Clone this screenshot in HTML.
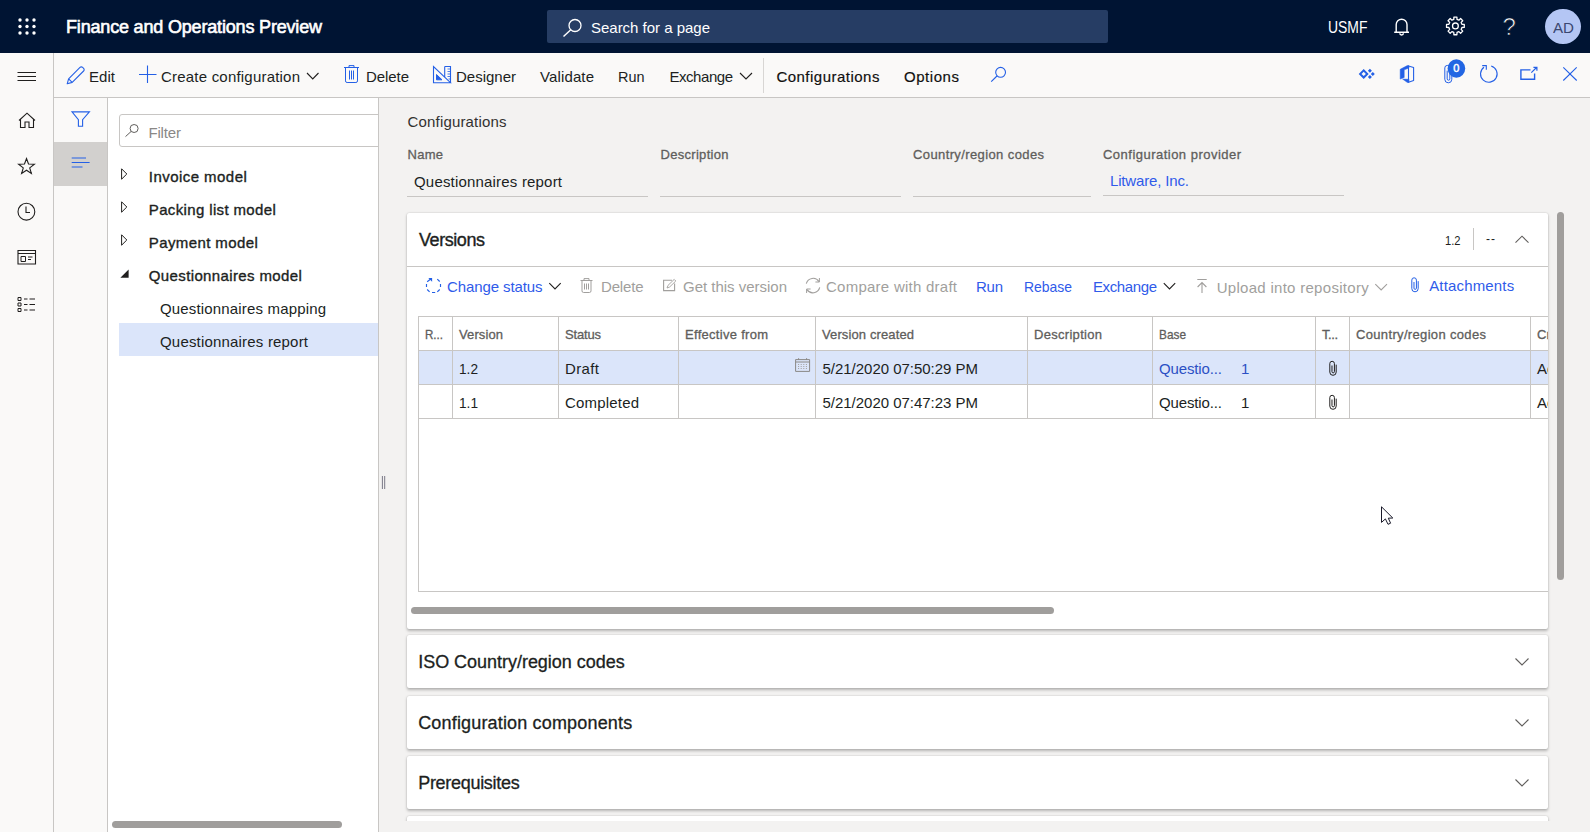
<!DOCTYPE html>
<html lang="en"><head><meta charset="utf-8"><title>Configurations</title>
<style>
html,body{margin:0;padding:0;}
body{width:1590px;height:832px;overflow:hidden;position:relative;background:#f3f2f1;font-family:"Liberation Sans",sans-serif;}
.a{position:absolute;}
.t{position:absolute;white-space:nowrap;line-height:20px;height:20px;}
svg{position:absolute;overflow:visible;}
#top{left:0;top:0;width:1590px;height:53px;background:#001433;}
#search{left:547px;top:10px;width:561px;height:33px;background:#263d64;border-radius:2px;}
#avatar{left:1545px;top:8.8px;width:36px;height:35.4px;border-radius:50%;background:#b4c6f4;}
#nav{left:0;top:53px;width:53px;height:779px;background:#faf9f8;border-right:1px solid #c8c6c4;}
#abar{left:54px;top:53px;width:1536px;height:44px;background:#faf9f8;border-bottom:1px solid #c8c6c4;}
#fstrip{left:54px;top:98px;width:53px;height:734px;background:#faf9f8;border-right:1px solid #c8c6c4;}
#fsel{left:54px;top:142px;width:53px;height:44px;background:#d2d0ce;}
#tree{left:108px;top:98px;width:270px;height:734px;background:#ffffff;border-right:1px solid #c8c6c4;}
#finput{left:119px;top:114px;width:270px;height:31px;border:1px solid #c8c6c4;border-radius:3px;background:#fff;}
#treeclip{left:108px;top:98px;width:270px;height:734px;overflow:hidden;}
#tsel{left:119px;top:323px;width:259px;height:33px;background:#dbe5fa;}
#tscroll{left:112px;top:821px;width:230px;height:7px;border-radius:4px;background:#a09e9c;}
.ul{height:1px;background:#c8c6c4;}
.card{background:#fff;box-shadow:0 1.5px 3px rgba(0,0,0,.26),0 0 1.5px rgba(0,0,0,.14);border-radius:2px;}
#vcard{left:407px;top:213px;width:1141px;height:416px;}
#vclip{left:407px;top:213px;width:1141px;height:416px;overflow:hidden;}
#grid{left:11px;top:103px;width:1200px;height:274px;border:1px solid #c8c6c4;}
.vl{position:absolute;top:0;width:1px;height:101px;background:#c8c6c4;}
.hl{position:absolute;left:0;width:1200px;height:1px;background:#c8c6c4;}
#rsel{left:0;top:34px;width:1200px;height:33px;background:#dbe5fa;}
#hscroll{left:411px;top:607px;width:643px;height:7px;border-radius:4px;background:#a09e9c;}
#vscroll{left:1557px;top:212px;width:7px;height:368px;border-radius:4px;background:#a09e9c;}

</style></head>
<body>
<div class="a" id="top"></div>
<div class="a" id="search"></div>
<div class="a" id="avatar"></div>
<div class="a" id="nav"></div>
<div class="a" id="abar"></div>
<div class="a" style="left:763px;top:58px;width:1px;height:35px;background:#d8d6d4"></div>
<div class="a" id="fstrip"></div>
<div class="a" id="fsel"></div>
<div class="a" id="tree"></div>
<div class="a" id="treeclip"><div class="a" id="finput" style="left:11px;top:16px"></div></div>
<div class="a" id="tsel"></div>
<div class="a" id="tscroll"></div>
<!-- field underlines -->
<div class="a ul" style="left:407px;top:196px;width:241px"></div>
<div class="a ul" style="left:660px;top:196px;width:241px"></div>
<div class="a ul" style="left:913px;top:196px;width:178px"></div>
<div class="a ul" style="left:1103px;top:195px;width:241px"></div>
<!-- versions card -->
<div class="a card" id="vcard"></div>
<div class="a" id="vclip">
  <div class="a" style="left:0;top:53px;width:1141px;height:1px;background:#c8c6c4"></div>
  <div class="a" style="left:1066px;top:15px;width:1px;height:22px;background:#c8c6c4"></div>
  <div class="a" id="grid">
    <div class="a" id="rsel"></div>
    <div class="hl" style="top:33px"></div><div class="hl" style="top:67px"></div><div class="hl" style="top:101px"></div>
    <div class="vl" style="left:33px"></div><div class="vl" style="left:139px"></div><div class="vl" style="left:259px"></div>
    <div class="vl" style="left:396px"></div><div class="vl" style="left:608px"></div><div class="vl" style="left:733px"></div>
    <div class="vl" style="left:896px"></div><div class="vl" style="left:930px"></div><div class="vl" style="left:1111px"></div>
    <span class="t" style="left:1118px;top:8px;font-size:13px;-webkit-text-stroke:0.3px;color:#605e5c">Created by</span>
    <span class="t" style="left:1118px;top:42px;font-size:15px;color:#201f1e">Admin</span>
    <span class="t" style="left:1118px;top:76px;font-size:15px;color:#201f1e">Admin</span>
  </div>
</div>
<div class="a" id="hscroll"></div>
<div class="a" id="vscroll"></div>
<div class="a card" style="left:407px;top:635px;width:1141px;height:53px"></div>
<div class="a card" style="left:407px;top:696px;width:1141px;height:53px"></div>
<div class="a card" style="left:407px;top:756px;width:1141px;height:53px"></div>
<div class="a" style="left:400px;top:810px;width:1160px;height:11px;overflow:hidden"><div class="a card" style="left:7px;top:6px;width:1141px;height:52px"></div></div>
<svg width="1590" height="832" viewBox="0 0 1590 832" style="left:0;top:0">
<circle cx="20" cy="20" r="1.7" fill="#fff"/>
<circle cx="20" cy="26.5" r="1.7" fill="#fff"/>
<circle cx="20" cy="33" r="1.7" fill="#fff"/>
<circle cx="27" cy="20" r="1.7" fill="#fff"/>
<circle cx="27" cy="26.5" r="1.7" fill="#fff"/>
<circle cx="27" cy="33" r="1.7" fill="#fff"/>
<circle cx="34" cy="20" r="1.7" fill="#fff"/>
<circle cx="34" cy="26.5" r="1.7" fill="#fff"/>
<circle cx="34" cy="33" r="1.7" fill="#fff"/>
<circle cx="575" cy="25.5" r="6" stroke="#fff" stroke-width="1.3" fill="none"/>
<path d="M570.8 29.8 L563.5 36.6" stroke="#ffffff" stroke-width="1.4" fill="none" />
<path d="M1396.2 32 V24.6 a5.4 5.4 0 0 1 10.8 0 V32 M1394.2 32.2 H1409 M1399.8 33.2 a1.8 1.8 0 0 0 3.6 0" stroke="#ffffff" stroke-width="1.4" fill="none" />
<path d="M1453.81 19.39 L1453.88 17.03 L1456.92 17.03 L1456.99 19.39 L1458.88 20.17 L1460.60 18.55 L1462.75 20.70 L1461.13 22.42 L1461.91 24.31 L1464.27 24.38 L1464.27 27.42 L1461.91 27.49 L1461.13 29.38 L1462.75 31.10 L1460.60 33.25 L1458.88 31.63 L1456.99 32.41 L1456.92 34.77 L1453.88 34.77 L1453.81 32.41 L1451.92 31.63 L1450.20 33.25 L1448.05 31.10 L1449.67 29.38 L1448.89 27.49 L1446.53 27.42 L1446.53 24.38 L1448.89 24.31 L1449.67 22.42 L1448.05 20.70 L1450.20 18.55 L1451.92 20.17 Z" stroke="#ffffff" stroke-width="1.3" fill="none" stroke-linejoin="round"/>
<circle cx="1455.4" cy="25.9" r="2.9" stroke="#fff" stroke-width="1.3" fill="none"/>
<path d="M17.5 72.5 H36 M17.5 76.5 H36 M17.5 80.5 H36" stroke="#201f1e" stroke-width="1.1" fill="none" />
<path d="M19 120.5 L27 113.2 L35 120.5 M20.5 119.5 V127.5 H25 V122 H29 V127.5 H33.5 V119.5" stroke="#201f1e" stroke-width="1.1" fill="none" />
<path d="M26.50 158.50 L28.50 164.05 L34.39 164.24 L29.73 167.85 L31.38 173.51 L26.50 170.20 L21.62 173.51 L23.27 167.85 L18.61 164.24 L24.50 164.05 Z" stroke="#201f1e" stroke-width="1.1" fill="none" stroke-linejoin="miter"/>
<circle cx="26.4" cy="211.7" r="8.4" stroke="#201f1e" stroke-width="1.1" fill="none"/>
<path d="M26 206.5 V212.5 H30" stroke="#201f1e" stroke-width="1.1" fill="none" />
<path d="M18 250.5 H35.5 V264 H18 Z M18 253.5 H35.5" stroke="#201f1e" stroke-width="1.1" fill="none" />
<path d="M21 256.5 H25.5 V261.5 H21 Z M28 257 H32.5 M28 259.5 H31" stroke="#201f1e" stroke-width="1" fill="none" />
<path d="M18 297.5 h3 v3 h-3 Z" stroke="#201f1e" stroke-width="1" fill="none" />
<path d="M24 299 H27.5 M29.5 299 H35" stroke="#201f1e" stroke-width="1.1" fill="none" />
<path d="M18 303 h3 v3 h-3 Z" stroke="#201f1e" stroke-width="1" fill="none" />
<path d="M24 304.5 H27.5 M29.5 304.5 H35" stroke="#201f1e" stroke-width="1.1" fill="none" />
<path d="M18 308.5 h3 v3 h-3 Z" stroke="#201f1e" stroke-width="1" fill="none" />
<path d="M24 310 H27.5 M29.5 310 H35" stroke="#201f1e" stroke-width="1.1" fill="none" />
<path d="M67.2 83.8 L68.6 78.8 L80 67.4 a1.8 1.8 0 0 1 2.6 0 l1 1 a1.8 1.8 0 0 1 0 2.6 L72.2 82.4 Z M68.6 78.8 L72.2 82.4" stroke="#2460e6" stroke-width="1.1" fill="none" stroke-linejoin="round"/>
<path d="M139 74.5 H156.5 M147.5 65.5 V83" stroke="#2460e6" stroke-width="1.1" fill="none" />
<path d="M307 73 L312.75 79 L318.5 73" stroke="#201f1e" stroke-width="1.1" fill="none" />
<path d="M740 73 L746 79 L752 73" stroke="#201f1e" stroke-width="1.1" fill="none" />
<path d="M344 67.5 H359 M349 67.5 V65.6 H354 V67.5 M345.5 67.5 V80.9 a1.6 1.6 0 0 0 1.6 1.6 H355.9 a1.6 1.6 0 0 0 1.6 -1.6 V67.5 M349.5 70.5 V79.5 M351.5 70.5 V79.5 M353.5 70.5 V79.5" stroke="#2460e6" stroke-width="1" fill="none" />
<path d="M433.5 66.5 V82.7 H450.5 Z M444.7 66.5 H450.5 V82.7 M444.7 66.5 V77" stroke="#2460e6" stroke-width="1.1" fill="none" stroke-linejoin="miter"/>
<path d="M436.5 74.5 V79.8 H442 Z" stroke="#2460e6" stroke-width="1" fill="#2460e6" />
<path d="M447.5 69 h3 M447.5 71.5 h3 M447.5 74 h3 M447.5 76.5 h3 M448.5 79 h2" stroke="#2460e6" stroke-width="0.8" fill="none" />
<circle cx="1000.6" cy="72.3" r="4.9" stroke="#2460e6" stroke-width="1.1" fill="none"/>
<path d="M997.2 75.8 L991.2 81.6" stroke="#2460e6" stroke-width="1.2" fill="none" />
<path d="M1363.7 68.9 L1368.7 73.9 L1363.7 78.9 L1358.7 73.9 Z M1363.7 71.7 L1365.9 73.9 L1363.7 76.1 L1361.5 73.9 Z" fill="#2460e6" fill-rule="evenodd"/>
<path d="M1369.9 68.8 L1371.9 70.8 L1369.9 72.8 L1367.9 70.8 Z M1372.8 71.9 L1374.8 73.9 L1372.8 75.9 L1370.8 73.9 Z M1369.9 75 L1371.9 77 L1369.9 79 L1367.9 77 Z" fill="#2460e6"/>
<path d="M1400.2 69.3 L1407.4 65.5 L1409 65.8 L1409 68 L1404.2 69.8 L1404.2 77.5 L1400.2 79.1 Z M1402.6 79.1 L1409 79.3 L1409 82.4 L1407.4 82.5 Z" fill="#2460e6" stroke="#2460e6" stroke-width="0.5" stroke-linejoin="round"/>
<path d="M1408.5 65.9 L1413.6 67.5 V80.6 L1408.5 82.2 Z" stroke="#2460e6" stroke-width="1.1" fill="none" stroke-linejoin="round"/>
<path d="M1451.8 69.576 V79.3 A3.5 3.5 0 0 1 1444.8 79.3 V67.92 A2.52 2.52 0 0 1 1449.84 67.92 V78.9 A1.33 1.33 0 0 1 1447.18 78.9 V70.62" stroke="#2460e6" stroke-width="1" fill="none" />
<ellipse cx="1456.4" cy="68.5" rx="8.8" ry="9.3" fill="#2266e3"/>
<path d="M1491.2 66 A8.3 8.3 0 1 1 1484 67.2" stroke="#2460e6" stroke-width="1.1" fill="none" />
<path d="M1482.2 65.6 H1486.3 V69.8" stroke="#2460e6" stroke-width="1.1" fill="none" />
<path d="M1530.5 69.9 H1520.9 V79.3 H1534.6 V73.6" stroke="#2460e6" stroke-width="1.4" fill="none" />
<path d="M1531.3 72.6 L1536.8 67.3 M1533.4 67.3 H1536.9 V70.8" stroke="#2460e6" stroke-width="1.2" fill="none" />
<path d="M1563.3 67.3 L1576.7 80.5 M1576.7 67.3 L1563.3 80.5" stroke="#2460e6" stroke-width="1.1" fill="none" />
<path d="M72 111.9 H89.4 L82.6 119.6 V126.3 H78.4 V119.6 Z" stroke="#2460e6" stroke-width="1.1" fill="none" stroke-linejoin="miter"/>
<path d="M71.7 158 H86 M71.7 162.5 H89.6 M71.7 167 H82.5" stroke="#2460e6" stroke-width="1.1" fill="none" />
<circle cx="134.1" cy="128.5" r="4" stroke="#605e5c" stroke-width="1" fill="none"/>
<path d="M131.2 131.4 L125.5 136.6" stroke="#605e5c" stroke-width="1" fill="none" />
<path d="M121.6 168.8 V179.2 L126.8 174 Z" stroke="#201f1e" stroke-width="1" fill="none" />
<path d="M121.6 201.8 V212.2 L126.8 207 Z" stroke="#201f1e" stroke-width="1" fill="none" />
<path d="M121.6 234.8 V245.2 L126.8 240 Z" stroke="#201f1e" stroke-width="1" fill="none" />
<path d="M128.6 269.6 V277.8 H120.4 Z" fill="#201f1e"/>
<path d="M382.4 476 V489 M384.7 476 V489" stroke="#6b6a7a" stroke-width="0.9" fill="none" />
<path d="M1515.5 242.6 L1522 236.2 L1528.5 242.6" stroke="#605e5c" stroke-width="1.1" fill="none" />
<path d="M1515.5 658.5 L1522 664.9 L1528.5 658.5" stroke="#605e5c" stroke-width="1.1" fill="none" />
<path d="M1515.5 719.5 L1522 725.9 L1528.5 719.5" stroke="#605e5c" stroke-width="1.1" fill="none" />
<path d="M1515.5 779.5 L1522 785.9 L1528.5 779.5" stroke="#605e5c" stroke-width="1.1" fill="none" />
<path d="M426.5 284 V287 M440.5 284 V287 M432 292.5 H435.2 M437.3 279.1 L439.7 281.5 M437.3 291.9 L439.7 289.5 M427.2 289.5 L429.6 291.9 M427.2 281.8 L431 278.8" stroke="#2460e6" stroke-width="1.15" fill="none" />
<path d="M428.3 277.9 H432.1 V281.7 Z" fill="#2460e6"/>
<path d="M549.3 283.2 L555 289 L560.7 283.2" stroke="#201f1e" stroke-width="1.1" fill="none" />
<path d="M580.5 280.5 H592.5 M584 280.5 V278.6 H589 V280.5 M582 280.5 V290.9 a1.6 1.6 0 0 0 1.6 1.6 H589.4 a1.6 1.6 0 0 0 1.6 -1.6 V280.5 M584.5 283.5 V289.5 M586.5 283.5 V289.5 M588.5 283.5 V289.5" stroke="#a19f9d" stroke-width="1" fill="none" />
<path d="M672 280.3 H663.6 V290.6 H674.6 V283.6" stroke="#a19f9d" stroke-width="1.1" fill="none" />
<path d="M667 288 L668 285.4 L674.2 279.4 L675.8 281 L669.6 287 Z" stroke="#a19f9d" stroke-width="0.9" fill="none" />
<path d="M806.3 283.6 A7 7 0 0 1 819 281.6 M819.7 287.4 A7 7 0 0 1 807 289.6" stroke="#a19f9d" stroke-width="1.1" fill="none" />
<path d="M819.4 278 V282 H815.4 M806.6 293 V289 H810.6" stroke="#a19f9d" stroke-width="1" fill="none" />
<path d="M1163.8 283.2 L1169.5 289 L1175.2 283.2" stroke="#201f1e" stroke-width="1.1" fill="none" />
<path d="M1197.3 279.5 H1206.7 M1202 293 V282.5 M1197.6 287 L1202 282.5 L1206.4 287" stroke="#a19f9d" stroke-width="1.1" fill="none" />
<path d="M1375.3 284.2 L1381.15 290 L1387 284.2" stroke="#a19f9d" stroke-width="1.1" fill="none" />
<path d="M1418.2 281.16 V288.6 A3.2 3.2 0 0 1 1411.8 288.6 V280.104 A2.304 2.304 0 0 1 1416.41 280.104 V288.2 A1.216 1.216 0 0 1 1413.98 288.2 V282" stroke="#2460e6" stroke-width="1" fill="none" />
<path d="M795.6 359.6 H809.6 V371.4 H795.6 Z M795.6 362 H809.6 M798.6 358.2 V360 M806.6 358.2 V360" stroke="#8a8886" stroke-width="1" fill="none" />
<path d="M798.6 364 V370 M801.2 364 V370 M803.8 364 V370 M806.4 364 V370" stroke="#a19f9d" stroke-width="1" fill="none" stroke-dasharray="1 1"/>
<path d="M1336.2 364.66 V372.1 A3.2 3.2 0 0 1 1329.8 372.1 V363.604 A2.304 2.304 0 0 1 1334.41 363.604 V371.7 A1.216 1.216 0 0 1 1331.98 371.7 V365.5" stroke="#201f1e" stroke-width="1" fill="none" />
<path d="M1336.2 398.66 V406.1 A3.2 3.2 0 0 1 1329.8 406.1 V397.604 A2.304 2.304 0 0 1 1334.41 397.604 V405.7 A1.216 1.216 0 0 1 1331.98 405.7 V399.5" stroke="#201f1e" stroke-width="1" fill="none" />
<path d="M1381.5 506.8 V522.4 L1385.4 518.9 L1388 524.3 L1390.6 523.2 L1388.3 518.2 L1392.8 518 Z" stroke="#1a1a2a" stroke-width="1" fill="#ffffff" stroke-linejoin="round"/>
</svg>

<span class="t" id="t0" style="left:66px;top:17px;font-size:18px;font-weight:400;color:#ffffff;letter-spacing:-0.177px;-webkit-text-stroke:0.6px;">Finance and Operations Preview</span>
<span class="t" id="t1" style="left:591px;top:18px;font-size:15px;font-weight:400;color:#ffffff;letter-spacing:-0.016px;">Search for a page</span>
<span class="t" id="t2" style="left:1327.7px;top:18px;font-size:16px;font-weight:400;color:#ffffff;letter-spacing:0.000px;transform-origin:0 50%;transform:scaleX(0.8714);">USMF</span>
<span class="t" id="t3" style="left:1552.6px;top:18px;font-size:14px;font-weight:400;color:#3a4770;letter-spacing:0.000px;transform-origin:0 50%;transform:scaleX(1.0795);">AD</span>
<span class="t" id="t4" style="left:1502.5px;top:17px;font-size:24px;font-weight:400;color:#ffffff;letter-spacing:0.000px;-webkit-text-stroke:0.7px #001433;">?</span>
<span class="t" id="t5" style="left:1453.2px;top:58px;font-size:11px;font-weight:400;color:#ffffff;letter-spacing:0.000px;-webkit-text-stroke:0.45px;">0</span>
<span class="t" id="t6" style="left:89px;top:67px;font-size:15px;font-weight:400;color:#201f1e;letter-spacing:0.047px;">Edit</span>
<span class="t" id="t7" style="left:161px;top:67px;font-size:15px;font-weight:400;color:#201f1e;letter-spacing:0.206px;">Create configuration</span>
<span class="t" id="t8" style="left:366px;top:67px;font-size:15px;font-weight:400;color:#201f1e;letter-spacing:-0.072px;">Delete</span>
<span class="t" id="t9" style="left:456px;top:67px;font-size:15px;font-weight:400;color:#201f1e;letter-spacing:-0.004px;">Designer</span>
<span class="t" id="t10" style="left:540px;top:67px;font-size:15px;font-weight:400;color:#201f1e;letter-spacing:0.129px;">Validate</span>
<span class="t" id="t11" style="left:618px;top:67px;font-size:15px;font-weight:400;color:#201f1e;letter-spacing:0.000px;transform-origin:0 50%;transform:scaleX(0.9625);">Run</span>
<span class="t" id="t12" style="left:669.5px;top:67px;font-size:15px;font-weight:400;color:#201f1e;letter-spacing:-0.460px;">Exchange</span>
<span class="t" id="t13" style="left:776.4px;top:67px;font-size:15px;font-weight:400;color:#11100f;letter-spacing:0.482px;-webkit-text-stroke:0.18px;">Configurations</span>
<span class="t" id="t14" style="left:904px;top:67px;font-size:15px;font-weight:400;color:#11100f;letter-spacing:0.549px;-webkit-text-stroke:0.18px;">Options</span>
<span class="t" id="t15" style="left:148.4px;top:123px;font-size:15px;font-weight:400;color:#8a8886;letter-spacing:-0.169px;">Filter</span>
<span class="t" id="t16" style="left:148.8px;top:167px;font-size:15px;font-weight:400;color:#201f1e;letter-spacing:0.453px;-webkit-text-stroke:0.36px;">Invoice model</span>
<span class="t" id="t17" style="left:148.8px;top:200px;font-size:15px;font-weight:400;color:#201f1e;letter-spacing:0.359px;-webkit-text-stroke:0.36px;">Packing list model</span>
<span class="t" id="t18" style="left:148.8px;top:233px;font-size:15px;font-weight:400;color:#201f1e;letter-spacing:0.398px;-webkit-text-stroke:0.36px;">Payment model</span>
<span class="t" id="t19" style="left:148.8px;top:266px;font-size:15px;font-weight:400;color:#201f1e;letter-spacing:0.373px;-webkit-text-stroke:0.36px;">Questionnaires model</span>
<span class="t" id="t20" style="left:160px;top:299px;font-size:15px;font-weight:400;color:#201f1e;letter-spacing:0.161px;">Questionnaires mapping</span>
<span class="t" id="t21" style="left:160px;top:332px;font-size:15px;font-weight:400;color:#201f1e;letter-spacing:0.188px;">Questionnaires report</span>
<span class="t" id="t22" style="left:407.5px;top:112px;font-size:15px;font-weight:400;color:#323130;letter-spacing:0.174px;">Configurations</span>
<span class="t" id="t23" style="left:407.5px;top:145px;font-size:13px;font-weight:400;color:#605e5c;letter-spacing:0.271px;-webkit-text-stroke:0.3px;">Name</span>
<span class="t" id="t24" style="left:660.5px;top:145px;font-size:13px;font-weight:400;color:#605e5c;letter-spacing:0.297px;-webkit-text-stroke:0.3px;">Description</span>
<span class="t" id="t25" style="left:913px;top:145px;font-size:13px;font-weight:400;color:#605e5c;letter-spacing:0.391px;-webkit-text-stroke:0.3px;">Country/region codes</span>
<span class="t" id="t26" style="left:1103px;top:145px;font-size:13px;font-weight:400;color:#605e5c;letter-spacing:0.481px;-webkit-text-stroke:0.3px;">Configuration provider</span>
<span class="t" id="t27" style="left:414px;top:172px;font-size:15px;font-weight:400;color:#201f1e;letter-spacing:0.188px;">Questionnaires report</span>
<span class="t" id="t28" style="left:1110px;top:171px;font-size:15px;font-weight:400;color:#2f5bea;letter-spacing:-0.156px;">Litware, Inc.</span>
<span class="t" id="t29" style="left:419px;top:230px;font-size:18px;font-weight:400;color:#201f1e;letter-spacing:-0.435px;-webkit-text-stroke:0.36px;">Versions</span>
<span class="t" id="t30" style="left:1445px;top:231px;font-size:12px;font-weight:400;color:#201f1e;letter-spacing:0.000px;transform-origin:0 50%;transform:scaleX(0.9288);">1.2</span>
<span class="t" id="t31" style="left:1486px;top:229px;font-size:12px;font-weight:400;color:#201f1e;letter-spacing:1.000px;">--</span>
<span class="t" id="t32" style="left:447px;top:277px;font-size:15px;font-weight:400;color:#2f5bea;letter-spacing:-0.103px;">Change status</span>
<span class="t" id="t33" style="left:601px;top:277px;font-size:15px;font-weight:400;color:#a19f9d;letter-spacing:-0.172px;">Delete</span>
<span class="t" id="t34" style="left:683px;top:277px;font-size:15px;font-weight:400;color:#a19f9d;letter-spacing:-0.015px;">Get this version</span>
<span class="t" id="t35" style="left:826px;top:277px;font-size:15px;font-weight:400;color:#a19f9d;letter-spacing:0.252px;">Compare with draft</span>
<span class="t" id="t36" style="left:976px;top:277px;font-size:15px;font-weight:400;color:#2f5bea;letter-spacing:-0.266px;">Run</span>
<span class="t" id="t37" style="left:1024px;top:277px;font-size:15px;font-weight:400;color:#2f5bea;letter-spacing:0.000px;transform-origin:0 50%;transform:scaleX(0.9284);">Rebase</span>
<span class="t" id="t38" style="left:1093px;top:277px;font-size:15px;font-weight:400;color:#2f5bea;letter-spacing:-0.388px;">Exchange</span>
<span class="t" id="t39" style="left:1216.7px;top:278px;font-size:15px;font-weight:400;color:#a19f9d;letter-spacing:0.289px;">Upload into repository</span>
<span class="t" id="t40" style="left:1429.2px;top:276px;font-size:15px;font-weight:400;color:#2f5bea;letter-spacing:0.163px;">Attachments</span>
<span class="t" id="t41" style="left:425px;top:325px;font-size:13px;font-weight:400;color:#605e5c;letter-spacing:0.000px;-webkit-text-stroke:0.3px;transform-origin:0 50%;transform:scaleX(0.8896);">R...</span>
<span class="t" id="t42" style="left:459px;top:325px;font-size:13px;font-weight:400;color:#605e5c;letter-spacing:0.104px;-webkit-text-stroke:0.3px;">Version</span>
<span class="t" id="t43" style="left:565px;top:325px;font-size:13px;font-weight:400;color:#605e5c;letter-spacing:-0.172px;-webkit-text-stroke:0.3px;">Status</span>
<span class="t" id="t44" style="left:685px;top:325px;font-size:13px;font-weight:400;color:#605e5c;letter-spacing:0.290px;-webkit-text-stroke:0.3px;">Effective from</span>
<span class="t" id="t45" style="left:822px;top:325px;font-size:13px;font-weight:400;color:#605e5c;letter-spacing:0.118px;-webkit-text-stroke:0.3px;">Version created</span>
<span class="t" id="t46" style="left:1034px;top:325px;font-size:13px;font-weight:400;color:#605e5c;letter-spacing:0.297px;-webkit-text-stroke:0.3px;">Description</span>
<span class="t" id="t47" style="left:1159px;top:325px;font-size:13px;font-weight:400;color:#605e5c;letter-spacing:0.000px;-webkit-text-stroke:0.3px;transform-origin:0 50%;transform:scaleX(0.9109);">Base</span>
<span class="t" id="t48" style="left:1322px;top:325px;font-size:13px;font-weight:400;color:#605e5c;letter-spacing:-0.448px;-webkit-text-stroke:0.3px;">T...</span>
<span class="t" id="t49" style="left:1356px;top:325px;font-size:13px;font-weight:400;color:#605e5c;letter-spacing:0.338px;-webkit-text-stroke:0.3px;">Country/region codes</span>
<span class="t" id="t50" style="left:459px;top:359px;font-size:15px;font-weight:400;color:#201f1e;letter-spacing:0.000px;transform-origin:0 50%;transform:scaleX(0.9109);">1.2</span>
<span class="t" id="t51" style="left:565px;top:359px;font-size:15px;font-weight:400;color:#201f1e;letter-spacing:0.371px;">Draft</span>
<span class="t" id="t52" style="left:822.5px;top:359px;font-size:15px;font-weight:400;color:#201f1e;letter-spacing:-0.023px;">5/21/2020 07:50:29 PM</span>
<span class="t" id="t53" style="left:1159px;top:359px;font-size:15px;font-weight:400;color:#2b50c4;letter-spacing:-0.134px;">Questio...</span>
<span class="t" id="t54" style="left:1241px;top:359px;font-size:15px;font-weight:400;color:#2b50c4;letter-spacing:0.000px;">1</span>
<span class="t" id="t55" style="left:459px;top:393px;font-size:15px;font-weight:400;color:#201f1e;letter-spacing:0.000px;transform-origin:0 50%;transform:scaleX(0.9109);">1.1</span>
<span class="t" id="t56" style="left:565px;top:393px;font-size:15px;font-weight:400;color:#201f1e;letter-spacing:0.182px;">Completed</span>
<span class="t" id="t57" style="left:822.5px;top:393px;font-size:15px;font-weight:400;color:#201f1e;letter-spacing:-0.023px;">5/21/2020 07:47:23 PM</span>
<span class="t" id="t58" style="left:1159px;top:393px;font-size:15px;font-weight:400;color:#201f1e;letter-spacing:-0.134px;">Questio...</span>
<span class="t" id="t59" style="left:1241px;top:393px;font-size:15px;font-weight:400;color:#201f1e;letter-spacing:0.000px;">1</span>
<span class="t" id="t60" style="left:418.2px;top:652px;font-size:18px;font-weight:400;color:#201f1e;letter-spacing:-0.026px;-webkit-text-stroke:0.3px;">ISO Country/region codes</span>
<span class="t" id="t61" style="left:418.2px;top:713px;font-size:18px;font-weight:400;color:#201f1e;letter-spacing:0.168px;-webkit-text-stroke:0.3px;">Configuration components</span>
<span class="t" id="t62" style="left:418.2px;top:773px;font-size:18px;font-weight:400;color:#201f1e;letter-spacing:-0.296px;-webkit-text-stroke:0.3px;">Prerequisites</span>

</body></html>
